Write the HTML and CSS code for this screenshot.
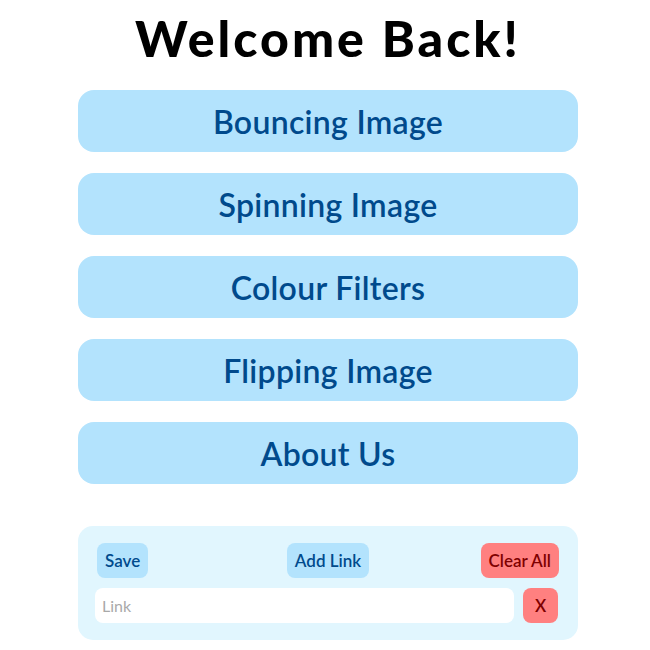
FILE: index.html
```html
<!DOCTYPE html>
<html>
<head>
<meta charset="utf-8">
<link rel="stylesheet" href="styles.css">
</head>
<body>
<div class="page">
  <h1 class="title">Welcome Back!</h1>
  <nav class="menu">
    <button class="menu-btn">Bouncing Image</button>
    <button class="menu-btn">Spinning Image</button>
    <button class="menu-btn">Colour Filters</button>
    <button class="menu-btn">Flipping Image</button>
    <button class="menu-btn">About Us</button>
  </nav>
  <section class="links">
    <div class="links-actions">
      <button class="small-btn blue start">Save</button>
      <button class="small-btn blue">Add Link</button>
      <button class="small-btn red end">Clear All</button>
    </div>
    <div class="link-row">
      <input class="link-input" type="text" placeholder="Link">
      <button class="small-btn red square">X</button>
    </div>
  </section>
</div>
</body>
</html>
```
FILE: styles.css
```css
html, body {
  margin: 0;
  padding: 0;
  background: #ffffff;
}
body {
  font-family: "Lato", "Noto Sans", sans-serif;
  padding-left: 6px;
}
.page {
  width: 500px;
  margin: 0 auto;
  display: flex;
  flex-direction: column;
}
.title {
  margin: 8px 0 0 0;
  height: 82px;
  font-size: 50px;
  font-weight: 900;
  line-height: 60px;
  text-align: center;
  color: #000;
  letter-spacing: 3px;
}
.menu {
  display: flex;
  flex-direction: column;
  gap: 21px;
}
.menu-btn {
  height: 62px;
  border: none;
  border-radius: 16px;
  background: #b3e3fd;
  color: #004a8c;
  font-family: inherit;
  font-size: 32px;
  font-weight: 600;
  letter-spacing: 0.3px;
  padding: 0;
  cursor: pointer;
}
.links {
  margin-top: 42px;
  background: #e1f6fe;
  border-radius: 15px;
  padding: 17px 19px 17px 17px;
  display: flex;
  flex-direction: column;
  gap: 10px;
}
.links-actions {
  display: grid;
  grid-template-columns: 1fr auto 1fr;
  align-items: center;
  padding-left: 2px;
}
.start {
  justify-self: start;
}
.end {
  justify-self: end;
}
.small-btn {
  height: 35px;
  border: none;
  border-radius: 8px;
  font-family: inherit;
  font-size: 17px;
  font-weight: 600;
  padding: 0 8px;
}
.small-btn.blue {
  background: #b3e3fd;
  color: #004a8c;
}
.small-btn.red {
  background: #ff8080;
  color: #7f0000;
}
.small-btn.square {
  width: 35px;
  padding: 0;
}
.link-row {
  display: flex;
  gap: 9px;
  padding-right: 1px;
}
.link-input {
  flex: 1;
  height: 35px;
  box-sizing: border-box;
  border: none;
  border-radius: 8px;
  background: #fff;
  padding: 0 7px;
  font-family: inherit;
  font-size: 16px;
  outline: none;
}
.link-input::placeholder {
  color: #a9a9a9;
}
```
